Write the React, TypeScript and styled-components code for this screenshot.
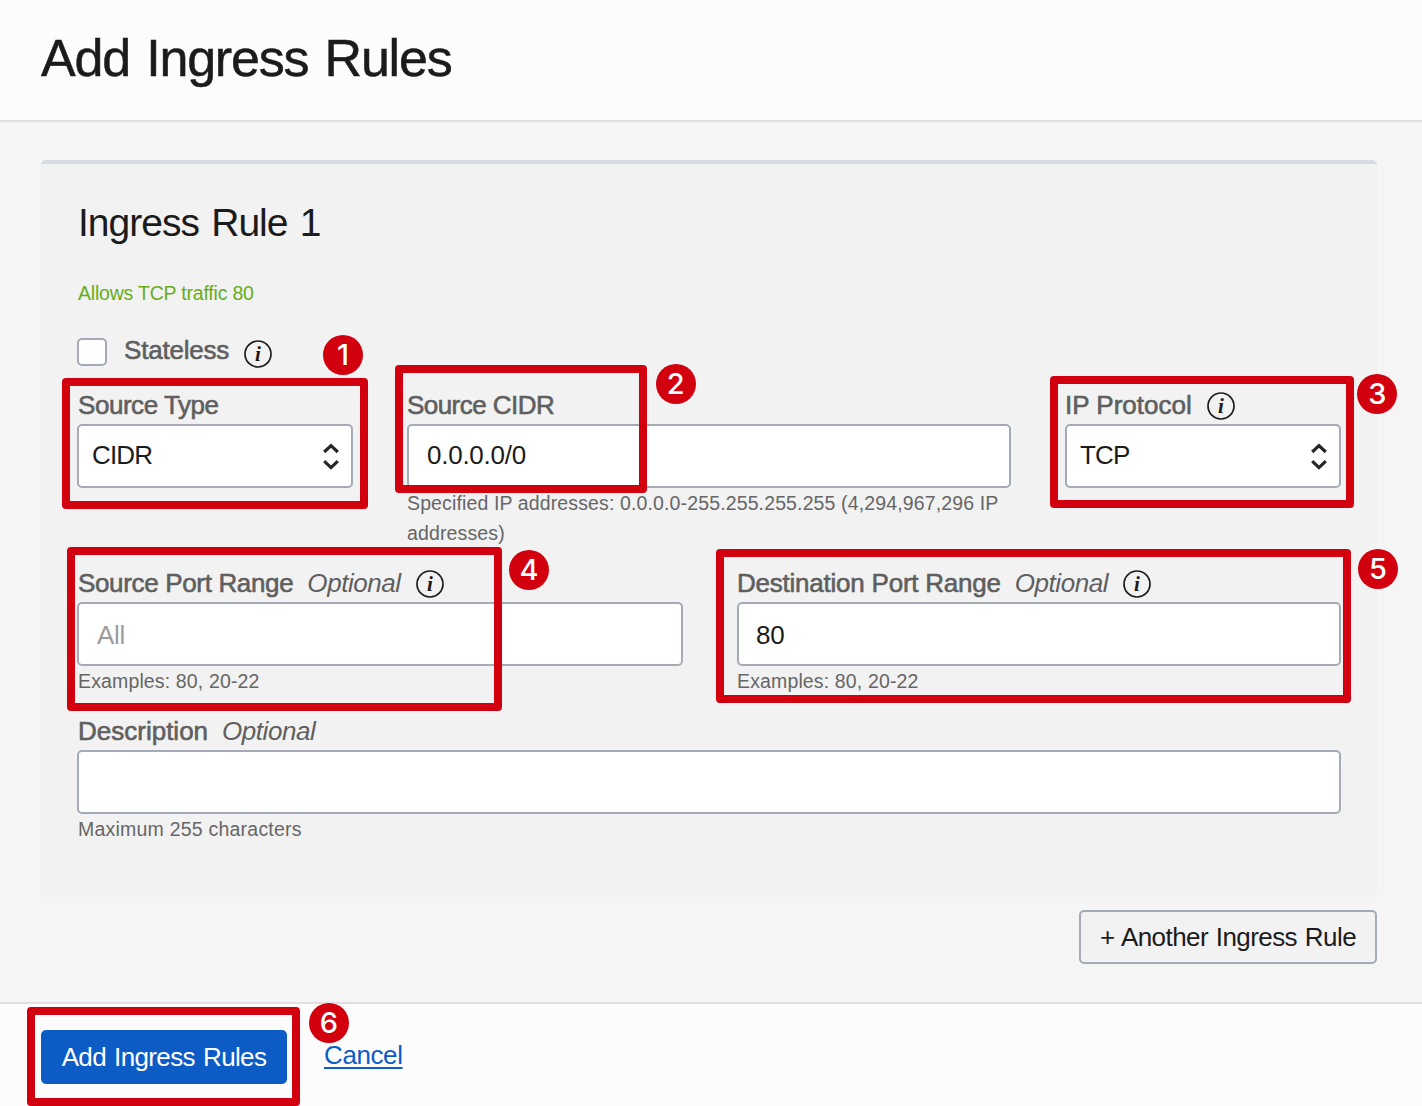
import React from "react";
import styled, { createGlobalStyle } from "styled-components";

const GlobalStyle = createGlobalStyle`
  *, *::before, *::after { box-sizing: border-box; }
  html, body { margin: 0; padding: 0; }
  body {
    background: #fcfcfc;
    color: #1b1b1b;
    font-family: "Liberation Sans", Arial, sans-serif;
    font-size: 26px;
    overflow: hidden;
  }
`;

const Page = styled.div`
  position: relative;
  display: flex;
  flex-direction: column;
  width: 1422px;
  height: 1106px;
  overflow: hidden;
`;

const Header = styled.header`
  height: 122px;
  padding: 28px 41px 0;
  background: #fcfcfc;
  border-bottom: 2px solid #dfdfdf;
`;

const Title = styled.h1`
  margin: 0;
  font-size: 52px;
  font-weight: 400;
  line-height: 60px;
  letter-spacing: -1.2px;
  word-spacing: 3px;
  -webkit-text-stroke: 0.5px #1b1b1b;
`;

const Main = styled.main`
  display: flex;
  flex-direction: column;
  height: 880px;
  padding: 38px 45px 0 41px;
  background: #f5f5f5;
`;

const Card = styled.section`
  height: 737px;
  padding: 35px 36px 0;
  background: #f2f2f2;
  border-top: 4px solid #d8dbe1;
  border-radius: 5px;
`;

const CardTitle = styled.h2`
  margin: 0;
  padding-left: 1px;
  font-size: 39px;
  font-weight: 400;
  line-height: 48px;
  letter-spacing: -1px;
  word-spacing: 2.5px;
`;

const Summary = styled.p`
  margin: 31px 0 0;
  padding-left: 1px;
  color: #66ad1b;
  font-size: 19.5px;
  line-height: 30px;
  letter-spacing: -0.2px;
`;

const CheckRow = styled.div`
  display: flex;
  align-items: center;
  height: 36px;
  margin-top: 26px;
`;

const Checkbox = styled.span`
  width: 30px;
  height: 28px;
  margin-right: 17px;
  background: #fff;
  border: 2px solid #a5abb5;
  border-radius: 5px;
`;

const LabelText = styled.span<{ $track?: number; $lift?: number }>`
  padding-bottom: ${(p) => p.$lift ?? 0}px;
  color: #5f5f5f;
  letter-spacing: ${(p) => p.$track ?? 0}px;
  white-space: nowrap;
  -webkit-text-stroke: 0.6px #5f5f5f;
`;

const Optional = styled.em`
  margin-left: 14px;
  color: #5f5f5f;
  letter-spacing: -0.45px;
`;

const InfoIcon = styled.svg<{ $drop?: number }>`
  flex: none;
  width: 28px;
  height: 28px;
  margin: ${(p) => p.$drop ?? 2}px 0 0 15px;

  circle { fill: none; stroke: #1b1b1b; stroke-width: 1.7; }
  text {
    fill: #1b1b1b;
    font: italic 700 21px "Liberation Serif", "Times New Roman", serif;
    text-anchor: middle;
  }
`;

const Row = styled.div<{ $columns: string }>`
  display: grid;
  grid-template-columns: ${(p) => p.$columns};
  column-gap: 54px;
`;

const FieldBox = styled.div`
  display: flex;
  flex-direction: column;
  min-width: 0;
`;

const FieldLabel = styled.label<{ $indent?: number }>`
  display: flex;
  align-items: center;
  height: 54px;
  padding: 16px 0 0 ${(p) => p.$indent ?? 0}px;
  line-height: 38px;
`;

const TextInput = styled.input<{ $top?: number; $bottom?: number; $left?: number }>`
  width: 100%;
  height: 64px;
  padding: ${(p) => p.$top ?? 0}px 16px ${(p) => p.$bottom ?? 0}px ${(p) => p.$left ?? 17}px;
  background: #fff;
  border: 2px solid #a5abb5;
  border-radius: 5px;
  color: #1b1b1b;
  font: inherit;
  letter-spacing: -0.25px;
  outline: none;

  &::placeholder { color: #9c9c9c; opacity: 1; }
`;

const SelectBox = styled.div`
  display: flex;
  align-items: center;
  justify-content: space-between;
  height: 64px;
  padding: 0 11px 0 13px;
  background: #fff;
  border: 2px solid #a5abb5;
  border-radius: 5px;
`;

const SelectValue = styled.span`
  padding-bottom: 2px;
  letter-spacing: -0.85px;
`;

const Hint = styled.p<{ $track?: number; $indent?: number }>`
  margin: 0;
  padding-left: ${(p) => p.$indent ?? 0}px;
  color: #666;
  font-size: 19.5px;
  line-height: 30px;
  letter-spacing: ${(p) => p.$track ?? 0.14}px;
`;

const AnotherButton = styled.button`
  align-self: flex-end;
  width: 298px;
  height: 54px;
  margin-top: 13px;
  padding: 0;
  background: #f2f2f2;
  border: 2px solid #a5abb5;
  border-radius: 5px;
  color: #1b1b1b;
  font: inherit;
  letter-spacing: -0.58px;
  word-spacing: 1.2px;
`;

const Footer = styled.footer`
  display: flex;
  align-items: flex-start;
  flex: 1;
  padding: 26px 41px 0;
  background: #fcfcfc;
  border-top: 2px solid #dfdfdf;
`;

const SubmitButton = styled.button`
  width: 246px;
  height: 54px;
  padding: 0;
  background: #0d5cc5;
  border: 0;
  border-radius: 5px;
  color: #fff;
  font: inherit;
  letter-spacing: -0.62px;
  word-spacing: 1.4px;
`;

const CancelLink = styled.a`
  margin-left: 37px;
  color: #0d5cc5;
  line-height: 51px;
  letter-spacing: -0.4px;
  text-decoration: underline;
  text-decoration-thickness: 2px;
  text-underline-offset: 3px;
`;

const Highlight = styled.div<{ $x: number; $y: number; $w: number; $h: number }>`
  position: absolute;
  left: ${(p) => p.$x}px;
  top: ${(p) => p.$y}px;
  width: ${(p) => p.$w}px;
  height: ${(p) => p.$h}px;
  border: 8px solid #d2000f;
  border-radius: 4px;
  pointer-events: none;
`;

const StepBadge = styled.div<{ $x: number; $y: number }>`
  position: absolute;
  left: ${(p) => p.$x}px;
  top: ${(p) => p.$y}px;
  width: 40px;
  height: 40px;
  background: #d2000f;
  border-radius: 50%;
  color: #fff;
  font: 500 29px/40px Inter, "Liberation Sans", sans-serif;
  text-align: center;
`;

const steps = [
  { box: [62, 378, 305.6, 131.3], badge: [323, 334.5] },
  { box: [395, 365, 252, 128], badge: [655.7, 363.5] },
  { box: [1050, 375.5, 304, 132], badge: [1357.3, 373.5] },
  { box: [66.5, 547, 435.5, 164], badge: [509, 549.7] },
  { box: [716, 549, 635, 154], badge: [1358, 549] },
  { box: [27, 1007, 273, 99], badge: [309, 1002.7] },
];

function Info({ drop }: { drop?: number }) {
  return (
    <InfoIcon viewBox="0 0 28 28" $drop={drop}>
      <circle cx="14" cy="14" r="13" />
      <text x="14" y="20.5">i</text>
    </InfoIcon>
  );
}

function Select({ value }: { value: string }) {
  return (
    <SelectBox>
      <SelectValue>{value}</SelectValue>
      <svg width="18" height="30" viewBox="0 0 18 30" fill="none" stroke="#262626" strokeWidth="3.2">
        <path d="M2.2 11 9 4.6 15.8 11M2.2 20.2 9 26.6 15.8 20.2" />
      </svg>
    </SelectBox>
  );
}

export default function App() {
  return (
    <Page>
      <GlobalStyle />
      <Header>
        <Title>Add Ingress Rules</Title>
      </Header>
      <Main>
        <Card>
          <CardTitle>Ingress Rule 1</CardTitle>
          <Summary>Allows TCP traffic 80</Summary>
          <CheckRow>
            <Checkbox />
            <LabelText $track={-0.2} $lift={4}>Stateless</LabelText>
            <Info drop={4} />
          </CheckRow>
          <Row $columns="276px 1fr 276px">
            <FieldBox>
              <FieldLabel $indent={1}><LabelText $track={-0.45}>Source Type</LabelText></FieldLabel>
              <Select value="CIDR" />
            </FieldBox>
            <FieldBox>
              <FieldLabel><LabelText $track={-0.55}>Source CIDR</LabelText></FieldLabel>
              <TextInput defaultValue="0.0.0.0/0" $bottom={2} $left={18} />
              <Hint $track={0.13}>
                Specified IP addresses: 0.0.0.0-255.255.255.255 (4,294,967,296 IP addresses)
              </Hint>
            </FieldBox>
            <FieldBox>
              <FieldLabel><LabelText>IP Protocol</LabelText><Info /></FieldLabel>
              <Select value="TCP" />
            </FieldBox>
          </Row>
          <Row $columns="606px 1fr">
            <FieldBox>
              <FieldLabel $indent={1}>
                <LabelText $track={-0.34}>Source Port Range</LabelText>
                <Optional>Optional</Optional>
                <Info />
              </FieldLabel>
              <TextInput placeholder="All" $top={2} $left={18} />
              <Hint $indent={1}>Examples: 80, 20-22</Hint>
            </FieldBox>
            <FieldBox>
              <FieldLabel>
                <LabelText $track={-0.23}>Destination Port Range</LabelText>
                <Optional>Optional</Optional>
                <Info />
              </FieldLabel>
              <TextInput defaultValue="80" $top={2} />
              <Hint>Examples: 80, 20-22</Hint>
            </FieldBox>
          </Row>
          <FieldBox>
            <FieldLabel $indent={1}>
              <LabelText>Description</LabelText>
              <Optional>Optional</Optional>
            </FieldLabel>
            <TextInput />
            <Hint $track={0.22} $indent={1}>Maximum 255 characters</Hint>
          </FieldBox>
        </Card>
        <AnotherButton>+ Another Ingress Rule</AnotherButton>
      </Main>
      <Footer>
        <SubmitButton>Add Ingress Rules</SubmitButton>
        <CancelLink>Cancel</CancelLink>
      </Footer>
      {steps.map(({ box, badge }, i) => (
        <React.Fragment key={i}>
          <Highlight $x={box[0]} $y={box[1]} $w={box[2]} $h={box[3]} />
          <StepBadge $x={badge[0]} $y={badge[1]}>{i + 1}</StepBadge>
        </React.Fragment>
      ))}
    </Page>
  );
}
